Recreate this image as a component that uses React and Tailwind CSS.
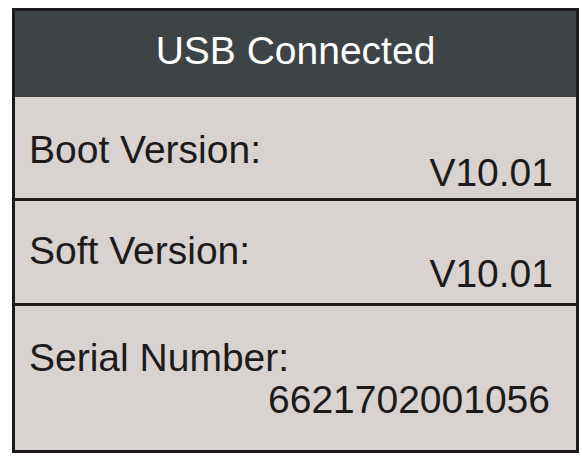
export default function App() {
  const font = { fontFamily: '"Liberation Sans", Arial, Helvetica, sans-serif' };
  return (
    <div className="w-[582px] h-[456px] bg-white pt-[8px] pl-[12px]" style={font}>
      <div className="w-[567px] h-[445px] border-[3px] border-[#1c1a1a] flex flex-col">
        <div className="h-[86px] shrink-0 bg-[#3e4345] pt-[20px] text-center text-white text-[39px] leading-none">
          USB Connected
        </div>
        <div className="h-[101px] shrink-0 bg-[#d8d2d0] pt-[41px] pl-[14px] pr-[23px] text-[#1c1a1a] text-[39px] leading-[23px]">
          <div>Boot Version:</div>
          <div className="text-right">V10.01</div>
        </div>
        <div className="h-[105px] shrink-0 border-t-[3px] border-[#1c1a1a] bg-[#d8d2d0] pt-[38px] pl-[14px] pr-[23px] text-[#1c1a1a] text-[39px] leading-[23px]">
          <div>Soft Version:</div>
          <div className="text-right">V10.01</div>
        </div>
        <div className="flex-1 border-t-[3px] border-[#1c1a1a] bg-[#d8d2d0] pt-[40px] pl-[14px] pr-[26px] text-[#1c1a1a] text-[39px] leading-[23px]">
          <div>Serial Number:</div>
          <div className="text-right mt-[19px]">6621702001056</div>
        </div>
      </div>
    </div>
  );
}
